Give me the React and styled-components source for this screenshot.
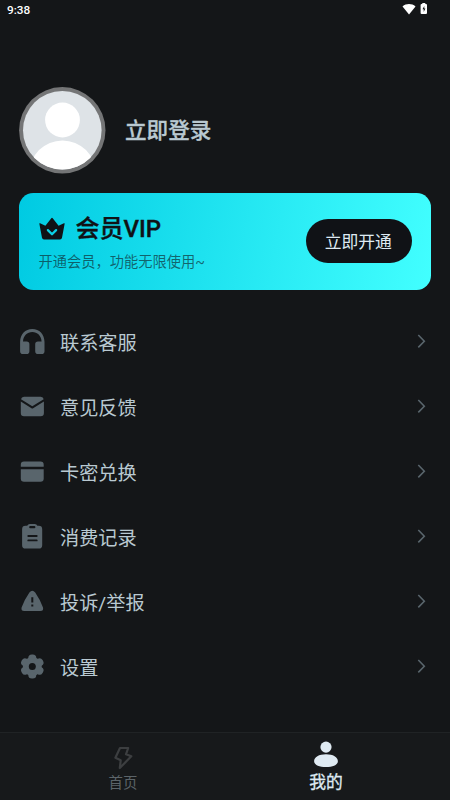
import styled, { createGlobalStyle } from "styled-components";

const GlobalStyle = createGlobalStyle`
    * {
        box-sizing: border-box;
    }
    body {
        margin: 0;
        background-color: #141618;
        font-family: Roboto, "Noto Sans CJK SC", sans-serif;
    }
    svg {
        display: block;
        flex-shrink: 0;
    }
`;
const Page = styled.div`
    display: flex;
    flex-direction: column;
    width: 450px;
    height: 800px;
    overflow: hidden;
    background-color: #141618;
    color: #b9c9d1;
`;
const StatusBar = styled.header`
    display: flex;
    justify-content: space-between;
    height: 20px;
    padding: 0 22px 0 7px;
    color: #fff;
    font-size: 11.8px;
    font-weight: 500;
    line-height: 21px;
`;
const StatusIcons = styled.div`
    display: flex;
    gap: 4px;
    padding-top: 3px;
`;
const Profile = styled.section`
    display: flex;
    align-items: center;
    gap: 19px;
    height: 87px;
    margin: 66.5px 19px 19px;
`;
const LoginText = styled.h1`
    margin: 0;
    padding-top: 2px;
    font-size: 21.6px;
    font-weight: 500;
    line-height: 30px;
    -webkit-text-stroke: .3px currentColor;
`;
const VipCard = styled.section`
    display: flex;
    align-items: center;
    justify-content: space-between;
    height: 97.5px;
    margin: 0 19px;
    padding: 0 19px;
    border-radius: 14.4px;
    background: linear-gradient(100deg, #00cae2 0%, #42ffff 100%);
    color: #101216;
`;
const VipTitle = styled.h2`
    display: flex;
    align-items: center;
    gap: 9.5px;
    margin: 1.5px 0 0;
    font-size: 24px;
    font-weight: 500;
    line-height: 34px;
    -webkit-text-stroke: .35px currentColor;
`;
const VipDesc = styled.p`
    margin: 5.5px 0 0 .5px;
    color: rgba(16, 18, 22, .6);
    font-size: 14.25px;
    line-height: 20px;
`;
const OpenButton = styled.button`
    width: 106px;
    height: 44px;
    padding: 0 1.5px 0 0;
    border: 0;
    border-radius: 22px;
    background-color: #101216;
    color: #dfeaf2;
    font-family: inherit;
    font-size: 16.8px;
`;
const Menu = styled.nav`
    display: flex;
    flex-direction: column;
    margin-top: 19.5px;
    padding: 0 24.5px 0 19px;
`;
const MenuRow = styled.div`
    display: flex;
    align-items: center;
    height: 65px;
    color: #59656c;
`;
const MenuLabel = styled.span`
    flex: 1;
    margin-left: 15px;
    padding-top: 3px;
    color: #b9c9d1;
    font-size: 19.2px;
    line-height: 28px;
`;
const TabBar = styled.footer`
    display: flex;
    height: 68px;
    margin-top: auto;
    padding: 0 22.5px 0 21.5px;
    border-top: 1px solid #202325;
    background-color: #17191b;
`;
const Tab = styled.div`
    display: flex;
    flex: 1;
    flex-direction: column;
    align-items: center;
    padding-top: ${props => props.$active ? '7px' : '13px'};
    color: ${props => props.$active ? '#dfeaf2' : '#5c6469'};
    font-size: ${props => props.$active ? '16.8px' : '14.4px'};
    -webkit-text-stroke: ${props => props.$active ? '.3px currentColor' : '0'};
    line-height: 28px;
`;

function WifiIcon() {
    return (
        <svg width="14" height="13" viewBox="0 0 14 13" fill="#fff">
            <path d="M.5 3.4C4.100.2 9.900.2 13.500 3.400L7 11.500z" />
        </svg>
    );
}

function BatteryIcon() {
    return (
        <svg width="8" height="12" viewBox="0 0 8 12">
            <path d="M2.300 0h3v1H6a1 1 0 0 1 1 1v8a1 1 0 0 1-1 1H1.600a1 1 0 0 1-1-1V2a1 1 0 0 1 1-1h.7z" fill="#fff" />
            <path d="M4.300 3 2.500 6.300h1.200V9l1.700-3.500H4.300z" fill="#141618" />
        </svg>
    );
}

function Avatar() {
    return (
        <svg width="87" height="87" viewBox="0 0 87 87">
            <clipPath id="face"><circle cx="43.3" cy="43.3" r="39.3" /></clipPath>
            <circle cx="43.3" cy="43.3" r="43.2" fill="#747576" />
            <circle cx="43.3" cy="43.3" r="39.3" fill="#dee3e7" />
            <g clipPath="url(#face)" fill="#fff">
                <circle cx="43.5" cy="33" r="17.4" />
                <circle cx="43.5" cy="86.6" r="33.2" />
            </g>
        </svg>
    );
}

function CrownIcon() {
    return (
        <svg width="28" height="24" viewBox="0 0 28 24">
            <path d="M1.400 7.100Q1 5.900 2.100 6.300L7.400 8.700 13.100 1.400Q14 .3 14.900 1.400L20.600 8.700 25.900 6.300Q27 5.900 26.600 7.100L24 20.800Q23.600 22.500 22 22.500H6Q4.400 22.500 4 20.800z" fill="#101216" />
            <path d="m9.900 13.100 4.100 4.100 4.100-4.100" fill="none" stroke="#0bd0e5" strokeWidth="2.3" strokeLinecap="round" strokeLinejoin="round" />
        </svg>
    );
}

function MenuIcon({children}) {
    return (
        <svg width="26" height="26" viewBox="0 0 26 26" fill="currentColor">
            {children}
        </svg>
    );
}

function HeadsetIcon() {
    return (
        <MenuIcon>
            <path d="M1.100 13C1.100 5.200 6.300 0 13.300 0s12.200 5.200 12.200 13v9.200a2.800 2.800 0 0 1-2.800 2.800H19a2.800 2.800 0 0 1-2.800-2.800v-7A2.800 2.800 0 0 1 19 12.400h3.600C22.200 6.900 18.400 3.100 13.300 3.100S4.400 6.900 4 12.400h3.600a2.800 2.800 0 0 1 2.800 2.800v7A2.800 2.800 0 0 1 7.600 25H3.900a2.800 2.800 0 0 1-2.800-2.800z" />
        </MenuIcon>
    );
}

function MailIcon() {
    return (
        <MenuIcon>
            <path d="M2 5.200Q2.400 2.700 5 2.700h16.700q2.600 0 3 2.500l-11.400 7z" />
            <path d="m1.800 7.400 10.700 6.800q.8.5 1.600 0l10.800-6.800V19a3.200 3.200 0 0 1-3.200 3.200H5A3.200 3.200 0 0 1 1.800 19z" />
        </MenuIcon>
    );
}

function CardIcon() {
    return (
        <MenuIcon>
            <path d="M1.800 7.800V5.700a3.200 3.200 0 0 1 3.200-3.200h16.500a3.200 3.200 0 0 1 3.200 3.200v2.100z" />
            <path d="M1.800 10.200h22.900v9.300a3.200 3.200 0 0 1-3.200 3.200H5a3.200 3.200 0 0 1-3.200-3.200z" />
        </MenuIcon>
    );
}

function ClipboardIcon() {
    return (
        <MenuIcon>
            <path d="M6.500 1.800h1.700Q9 0 10.800 0h5q1.800 0 2.600 1.800h1.400A3.400 3.400 0 0 1 23.200 5.200v16a3.400 3.400 0 0 1-3.400 3.400H6.500a3.400 3.400 0 0 1-3.400-3.400v-16A3.400 3.400 0 0 1 6.500 1.800z" />
            <rect x="10.2" y="1.9" width="6.2" height="2.4" rx="1" fill="#141618" />
            <path d="M9.300 12h8.400M9.300 16.400h8.400" stroke="#141618" strokeWidth="1.9" strokeLinecap="round" />
        </MenuIcon>
    );
}

function WarningIcon() {
    return (
        <MenuIcon>
            <path d="M10.400 3.600q2.900-3.500 5.800 0Q21 10.500 24 18.600q.8 3.500-2.600 3.500H5.200q-3.400 0-2.600-3.500 3-8.100 7.800-15z" />
            <path d="M13.300 8.200v5.200M13.300 15.600v2" stroke="#141618" strokeWidth="2" />
        </MenuIcon>
    );
}

function GearIcon() {
    return (
        <MenuIcon>
            <circle cx="13.3" cy="12.5" r="9.4" />
            {[0, 60, 120].map(angle => (
                <rect key={angle} x="9.3" y=".4" width="8" height="24.2" rx="3.6" transform={`rotate(${angle} 13.3 12.5)`} />
            ))}
            <circle cx="13.3" cy="12.5" r="3.5" fill="#141618" />
        </MenuIcon>
    );
}

function ChevronIcon() {
    return (
        <svg width="9" height="16" viewBox="0 0 9 16" fill="none" stroke="currentColor" strokeWidth="1.6">
            <path d="m1.300 1 6 6.200-6 6.200" />
        </svg>
    );
}

function BoltIcon() {
    return (
        <svg width="22" height="24" viewBox="0 0 22 24" fill="none" stroke="#3c3e40" strokeWidth="2.2" strokeLinejoin="round">
            <path d="M8 2h8.200L14 8.300l5.300 2L7.800 22l.9-7.700-5.300-2.600z" />
        </svg>
    );
}

function PersonIcon() {
    return (
        <svg width="26" height="28" viewBox="0 0 26 28" fill="currentColor">
            <circle cx="13" cy="7.1" r="5.6" />
            <path d="M1.100 21.300c0-4.200 4.800-7 11.900-7s11.900 2.800 11.900 7c0 3.500-4.800 5.700-11.900 5.700s-11.900-2.200-11.900-5.700z" />
        </svg>
    );
}

const menuItems = [
    {label: '联系客服', icon: HeadsetIcon},
    {label: '意见反馈', icon: MailIcon},
    {label: '卡密兑换', icon: CardIcon},
    {label: '消费记录', icon: ClipboardIcon},
    {label: '投诉/举报', icon: WarningIcon},
    {label: '设置', icon: GearIcon},
];

export default function App() {
    return (
        <Page lang="zh-CN">
            <GlobalStyle />
            <StatusBar>
                <span>9:38</span>
                <StatusIcons>
                    <WifiIcon />
                    <BatteryIcon />
                </StatusIcons>
            </StatusBar>
            <Profile>
                <Avatar />
                <LoginText>立即登录</LoginText>
            </Profile>
            <VipCard>
                <div>
                    <VipTitle>
                        <CrownIcon />
                        <span>会员VIP</span>
                    </VipTitle>
                    <VipDesc>开通会员，功能无限使用~</VipDesc>
                </div>
                <OpenButton>立即开通</OpenButton>
            </VipCard>
            <Menu>
                {menuItems.map(({label, icon: Icon}) => (
                    <MenuRow key={label}>
                        <Icon />
                        <MenuLabel>{label}</MenuLabel>
                        <ChevronIcon />
                    </MenuRow>
                ))}
            </Menu>
            <TabBar>
                <Tab>
                    <BoltIcon />
                    <span>首页</span>
                </Tab>
                <Tab $active>
                    <PersonIcon />
                    <span>我的</span>
                </Tab>
            </TabBar>
        </Page>
    );
}
